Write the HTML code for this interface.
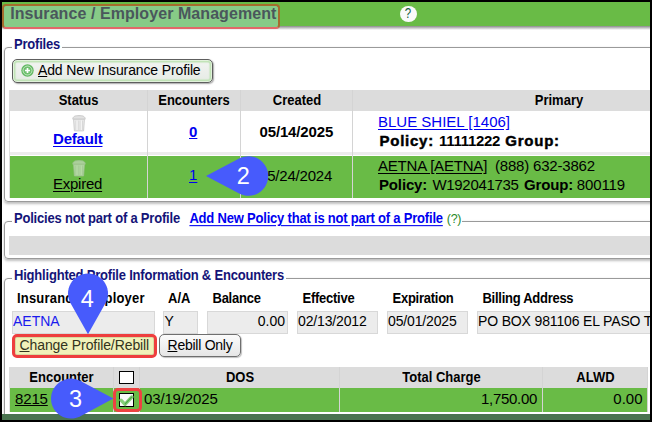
<!DOCTYPE html>
<html><head><meta charset="utf-8">
<style>
*{box-sizing:border-box;margin:0;padding:0}
html,body{width:652px;height:422px;overflow:hidden;background:#fff}
body{position:relative;font-family:"Liberation Sans",sans-serif;color:#000}
.a{position:absolute;white-space:nowrap}
.frame{position:absolute;background:#000}
.hdr{position:absolute;left:2px;top:2px;width:648px;height:24px;background:#69bb46}
.hdrshadow{position:absolute;left:2px;top:26px;width:648px;height:4px;background:linear-gradient(#8a8a8a,rgba(255,255,255,0))}
.ttlbox{position:absolute;left:2px;top:4px;width:278px;height:24.6px;border:2px solid rgb(165,108,45);border-bottom-color:rgb(226,104,104);border-radius:4px;background:linear-gradient(#87cb87 0,#87cb87 21.5px,#9fb0b8 21.5px,#c8d0d4 22.6px)}
.ttl{left:10.2px;top:4px;letter-spacing:0.07px;font-size:16px;font-weight:bold;color:#4a575c;line-height:20px}
.help{position:absolute;left:400px;top:5.6px;width:16.5px;height:16px;border-radius:50%;background:#fafafa;text-align:center;font-size:14px;line-height:16px;color:#0f5a3c;font-weight:normal}
.fs{position:absolute;border:1px solid #9a9a9a;border-radius:4px;box-shadow:0.5px 1.5px 2.5px rgba(0,0,0,.25)}
.lg{font-size:13px;font-weight:bold;color:#141478;background:#fff;padding:0 2px;line-height:16px;letter-spacing:-0.2px;transform:scaleY(1.07);transform-origin:0 12.5px}
.btn{position:absolute;border:1px solid #6f6f6f;border-radius:5px;box-shadow:1px 1px 1px rgba(0,0,0,.25)}
.th{position:absolute;background:#dcdcdc}
.grn{position:absolute;background:#69bb46}
.vl{position:absolute;width:1px;background:#d4d4d4}
.b13{font-size:13px;font-weight:bold;line-height:16px;transform:scaleY(1.07);transform-origin:0 12.5px}
.t15{font-size:15px;line-height:18px}
.t14{font-size:14px;line-height:17px}
.itx{letter-spacing:-0.15px}
.inp{position:absolute;top:311px;height:22.5px;background:#ececec;border:1px solid #d8d8d8}
a,.u{text-decoration:underline;text-underline-offset:2px}
.blue{color:#0000f0}
.xb{letter-spacing:0.75px;-webkit-text-stroke:0.45px #000}
</style></head><body>

<!-- header -->
<div class="hdr"></div>
<div class="hdrshadow"></div>
<div class="ttlbox"></div>
<div class="a ttl">Insurance / Employer Management</div>
<div class="help"><span style="display:inline-block;transform:scaleX(0.82) scaleY(1.05);transform-origin:50% 60%;position:relative;top:-0.6px">?</span></div>

<!-- fieldset 1 -->
<div class="fs" style="left:4px;top:47px;width:700px;height:155px"></div>
<div class="a lg" style="left:12px;top:36.5px">Profiles</div>

<div class="btn" style="left:12px;top:59px;width:200.5px;height:23.8px;border-color:#5e5e5e;background:linear-gradient(#f2f4f2,#e6ebe5);box-shadow:inset 0 0 0 1px #e2f2dc,inset 0 0 1px 2.5px #bfe3b5,1px 1px 1.5px rgba(0,0,0,.35)"></div>
<svg class="a" style="left:20.8px;top:63.6px" width="13" height="13" viewBox="0 0 13 13"><circle cx="6.5" cy="6.5" r="6.2" fill="#62b862"/><circle cx="6.5" cy="6.5" r="4.5" fill="#6fc06f" stroke="#c8eac8" stroke-width="0.9"/><path d="M6.5 4v5M4 6.5h5" stroke="#fff" stroke-width="1.7"/></svg>
<div class="a t14" style="left:38px;top:62px;letter-spacing:-0.13px"><span class="u" style="text-underline-offset:1px">A</span>dd New Insurance Profile</div>

<!-- profiles table -->
<div class="th" style="left:9px;top:90px;width:641px;height:21px"></div>
<div class="vl" style="left:9px;top:111px;height:86.5px;background:#dedede"></div>
<div class="a b13" style="left:10px;top:93px;width:137px;text-align:center">Status</div>
<div class="a b13" style="left:147px;top:93px;width:94px;text-align:center">Encounters</div>
<div class="a b13" style="left:241px;top:93px;width:112px;text-align:center">Created</div>
<div class="a b13" style="left:353px;top:93px;width:412px;text-align:center">Primary</div>

<div class="a" style="left:10px;top:152px;width:640px;height:3px;background:#ececec"></div>
<div class="grn" style="left:10px;top:156px;width:640px;height:41.5px"></div>

<div class="vl" style="left:147px;top:90px;height:107.5px"></div>
<div class="vl" style="left:240px;top:90px;height:107.5px"></div>
<div class="vl" style="left:352px;top:90px;height:107.5px"></div>

<!-- row 1 -->
<svg class="a" style="left:72px;top:115px" width="14" height="17" viewBox="0 0 14 17"><path d="M0.8 4.2C0.8 1.2 3.5 0.6 7 0.6S13.2 1.2 13.2 4.2z" fill="#e2e2e2" stroke="#c6c6c6" stroke-width="0.9"/><path d="M1.6 4.3h10.8l-0.8 11.6H2.4z" fill="#ececec" stroke="#c8c8c8" stroke-width="0.9"/><path d="M4 5.5v9.5M6 5.5v9.5M8.2 5.5v9.5M10.2 5.5v9.5" stroke="#c9c9c9" stroke-width="0.8"/><path d="M5 5.5v9.5M9.2 5.5v9.5" stroke="#fbfbfb" stroke-width="1"/></svg>
<div class="a t15" style="left:53px;top:129.8px;font-weight:bold;letter-spacing:-0.2px"><a class="blue" style="text-underline-offset:2.2px">Default</a></div>
<div class="a t15" style="left:189px;top:123px;font-weight:bold"><a class="blue" style="text-underline-offset:1.2px">0</a></div>
<div class="a t15" style="left:259.5px;top:123px;font-weight:bold;letter-spacing:-0.15px">05/14/2025</div>
<div class="a t15" style="left:378px;top:113px"><a class="blue">BLUE SHIEL [1406]</a></div>
<div class="a t15" style="left:379.5px;top:132px;font-weight:bold;word-spacing:1px"><span class="xb">Policy:</span> <span style="letter-spacing:-0.3px">11111222</span> <span class="xb">Group:</span></div>

<!-- row 2 -->
<svg class="a" style="left:72px;top:160px;opacity:.55" width="14" height="17" viewBox="0 0 14 17"><path d="M0.8 4.2C0.8 1.2 3.5 0.6 7 0.6S13.2 1.2 13.2 4.2z" fill="#e2e2e2" stroke="#c6c6c6" stroke-width="0.9"/><path d="M1.6 4.3h10.8l-0.8 11.6H2.4z" fill="#ececec" stroke="#c8c8c8" stroke-width="0.9"/><path d="M4 5.5v9.5M6 5.5v9.5M8.2 5.5v9.5M10.2 5.5v9.5" stroke="#c9c9c9" stroke-width="0.8"/><path d="M5 5.5v9.5M9.2 5.5v9.5" stroke="#fbfbfb" stroke-width="1"/></svg>
<div class="a t15" style="left:53px;top:175px;letter-spacing:-0.25px"><span class="u">Expired</span></div>
<div class="a t15" style="left:189px;top:166.3px"><a class="blue" style="text-underline-offset:1.5px">1</a></div>
<div class="a t15" style="left:259px;top:166.5px;letter-spacing:-0.2px">05/24/2024</div>
<div class="a t15" style="left:378px;top:157px;letter-spacing:-0.2px"><span class="u">AETNA [AETNA]</span>&nbsp; (888) 632-3862</div>
<div class="a t15" style="left:379px;top:176px;letter-spacing:-0.12px;word-spacing:1.2px"><b style="letter-spacing:-0.15px">Policy:</b> <span style="letter-spacing:-0.3px">W192041735</span> <b>Group:</b> <span style="margin-left:-1.6px">800119</span></div>

<!-- fieldset 2 -->
<div class="fs" style="left:4px;top:221px;width:700px;height:37.5px"></div>
<div class="a lg" style="left:12px;top:210.6px;padding-right:0.5px">Policies not part of a Profile<a class="blue" style="margin-left:9.5px;text-underline-offset:1.5px">Add New Policy that is not part of a Profile</a><span style="font-weight:normal;color:#2a8a2a;font-size:12.5px;letter-spacing:-0.3px;margin-left:4px">(?)</span></div>
<div class="th" style="left:9px;top:236px;width:641px;height:18.5px"></div>

<!-- fieldset 3 -->
<div class="fs" style="left:4px;top:278px;width:700px;height:200px"></div>
<div class="a lg" style="left:12px;top:267.8px">Highlighted Profile Information &amp; Encounters</div>

<div class="a b13" style="left:17px;top:291px;letter-spacing:0.19px">Insurance/Employer</div>
<div class="a b13" style="left:168px;top:291px">A/A</div>
<div class="a b13" style="left:212.5px;top:291px;letter-spacing:-0.25px">Balance</div>
<div class="a b13" style="left:302.5px;top:291px;letter-spacing:-0.25px">Effective</div>
<div class="a b13" style="left:392.5px;top:291px;letter-spacing:-0.25px">Expiration</div>
<div class="a b13" style="left:482.5px;top:291px;letter-spacing:-0.27px">Billing Address</div>

<div class="inp" style="left:12px;width:142.8px"></div>
<div class="inp" style="left:163px;width:35px"></div>
<div class="inp" style="left:207px;width:81px"></div>
<div class="inp" style="left:297px;width:81px"></div>
<div class="inp" style="left:387px;width:81px"></div>
<div class="inp" style="left:477px;width:200px"></div>
<div class="a t14" style="left:13px;top:313px;color:#1a1aee">AETNA</div>
<div class="a t14" style="left:164.5px;top:313px">Y</div>
<div class="a t14" style="left:207px;top:313px;width:78px;text-align:right">0.00</div>
<div class="a t14 itx" style="left:298px;top:313px">02/13/2012</div>
<div class="a t14 itx" style="left:388px;top:313px">05/01/2025</div>
<div class="a t14 itx" style="left:478px;top:313px">PO BOX 981106 EL PASO TX</div>

<!-- buttons -->
<div class="btn" style="left:12px;top:334px;width:145px;height:23.5px;border:3px solid #ee3e3e;border-radius:5px;background:#f1f1b9;box-shadow:inset 0 0 0 1px #d8d8a0"></div>
<div class="a t14" style="left:19.5px;top:337px;letter-spacing:-0.09px;color:#33331c"><span class="u" style="text-underline-offset:1px">C</span>hange Profile/Rebill</div>
<div class="btn" style="left:159px;top:334px;width:81.5px;height:22.5px;background:linear-gradient(#fbfbfb,#e6e6e6)"></div>
<div class="a t14" style="left:167.5px;top:336.5px;letter-spacing:-0.25px"><span class="u" style="text-underline-offset:1px">R</span>ebill Only</div>

<!-- encounter table -->
<div class="th" style="left:9px;top:367px;width:639px;height:21px"></div>
<div class="vl" style="left:9px;top:388px;height:24px;background:#e4e4e4"></div>
<div class="grn" style="left:10px;top:388px;width:638px;height:24px"></div>
<div class="vl" style="left:113px;top:367px;height:45px"></div>
<div class="vl" style="left:139px;top:367px;height:45px"></div>
<div class="vl" style="left:339px;top:367px;height:45px"></div>
<div class="vl" style="left:542px;top:367px;height:45px"></div>
<div class="vl" style="left:647px;top:367px;height:45px"></div>
<div class="a b13" style="left:10px;top:370px;width:103px;text-align:center">Encounter</div>
<div class="a" style="left:119.3px;top:370.9px;width:14.5px;height:13.6px;border:1.7px solid #000;background:#fff"></div>
<div class="a b13" style="left:140px;top:370px;width:200px;text-align:center">DOS</div>
<div class="a b13" style="left:340px;top:370px;width:203px;text-align:center">Total Charge</div>
<div class="a b13" style="left:543px;top:370px;width:105px;text-align:center">ALWD</div>

<div class="a t15" style="left:15px;top:389.5px;letter-spacing:-0.15px"><span class="u" style="text-underline-offset:1.2px">8215</span></div>
<div class="a" style="left:113px;top:388px;width:29px;height:23.5px;border:3px solid #ee4242;border-radius:5px"></div>
<div class="a" style="left:119.1px;top:393px;width:14.9px;height:14px;border:1.7px solid #000;background:#fafafa"></div>
<svg class="a" style="left:119px;top:394.5px" width="15" height="12" viewBox="0 0 15 12"><path d="M2 5.2L6 9.4L12.8 2" fill="none" stroke="#86cf7a" stroke-width="3.4" stroke-linejoin="round" stroke-linecap="round"/><path d="M6.2 8.8L12.6 2.2" fill="none" stroke="#4aa84a" stroke-width="1.2" stroke-linecap="round"/></svg>
<div class="a t15" style="left:144px;top:389.5px;letter-spacing:-0.15px">03/19/2025</div>
<div class="a t15" style="left:340px;top:390px;width:197px;text-align:right;letter-spacing:-0.3px">1,750.00</div>
<div class="a t15" style="left:543px;top:390px;width:99.5px;text-align:right">0.00</div>

<div class="a" style="left:5px;top:412px;width:645px;height:2px;background:#fff"></div>
<div class="a" style="left:2px;top:414px;width:648px;height:6px;background:#4a7450"></div>

<!-- callouts -->
<svg class="a" style="left:0;top:0" width="652" height="422">
<path d="M206.0 176.0L239.15 158.49A19.8 19.8 0 1 1 239.15 193.51Z" fill="#475bfc"/>
<path d="M88.0 334.2L70.58 303.33A20 20 0 1 1 105.42 303.33Z" fill="#475bfc"/>
<path d="M113.4 398.6L80.43 416.24A20 20 0 1 1 80.43 380.96Z" fill="#475bfc"/>
<text x="243.2" y="184.1" font-family="Liberation Sans" font-size="23.5" fill="#fff" text-anchor="middle">2</text>
<text x="87.3" y="307.1" font-family="Liberation Sans" font-size="23.5" fill="#fff" text-anchor="middle">4</text>
<text x="75.5" y="407" font-family="Liberation Sans" font-size="23.5" fill="#fff" text-anchor="middle">3</text>
</svg>

<!-- frame -->
<div class="frame" style="left:0;top:0;width:652px;height:2px"></div>
<div class="frame" style="left:0;top:420px;width:652px;height:2px"></div>
<div class="frame" style="left:0;top:0;width:2px;height:422px"></div>
<div class="frame" style="left:650px;top:0;width:2px;height:422px"></div>
</body></html>
